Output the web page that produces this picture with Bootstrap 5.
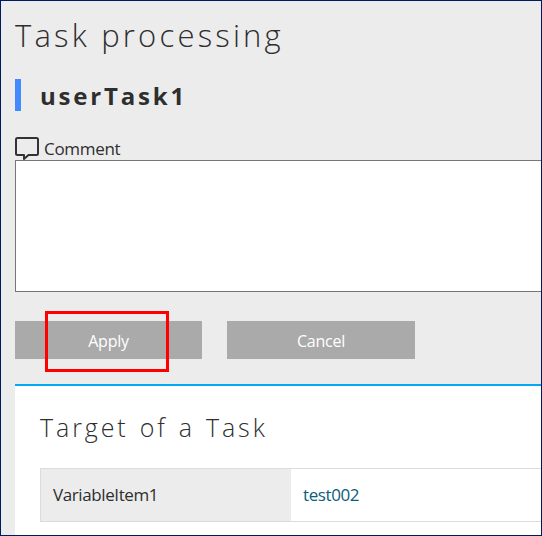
<!DOCTYPE html>
<html lang="en">
<head>
<meta charset="utf-8">
<meta name="viewport" content="width=device-width, initial-scale=1">
<title>Task processing</title>
<link href="https://cdn.jsdelivr.net/npm/bootstrap@5.3.0/dist/css/bootstrap.min.css" rel="stylesheet">
<style>
body{font-family:"Open Sans","Noto Sans",sans-serif;color:#2e2e2e}
.frame{height:536px;border:1px solid #001a5e;background:#ececec;padding-left:14px}
.page-title{font-size:31px;font-weight:300;letter-spacing:3.2px;line-height:42px;padding-top:13px;height:78px}
.task-name{height:32px;border-left:6px solid #448aff;padding-left:19px;font-size:24px;font-weight:700;letter-spacing:2.8px;line-height:34px}
.comment-label{height:49px;padding-top:26px;font-size:17px;line-height:23px;letter-spacing:-.3px}
.comment-label svg{margin-right:5px}
.comment-box{height:132px;border:1px solid #767676;border-right:0;border-radius:0;resize:none}
.actions{margin-top:29px;gap:25px}
.action{width:188px;height:38px;background:#aaa;color:#fff;border:0;border-radius:0;padding:2px 0 0;font-size:16px;letter-spacing:-.25px;--bs-btn-hover-color:#fff}
.action:first-child{width:187px}
.highlight{left:30px;top:-10px;width:124px;height:61px;border:3px solid #f00;pointer-events:none}
.target{margin-top:25px;border-top:2px solid #03a9f4;padding-left:25px}
.target-title{font-size:25px;font-weight:300;letter-spacing:2.9px;word-spacing:1.7px;line-height:34px;height:82px;padding-top:24px}
.item-row{height:54px;border:1px solid #dcdcdc;border-right:0;font-size:17px;letter-spacing:-.4px}
.item-name{width:250px;background:#ececec;padding-left:12px}
.item-value{padding-left:12px;color:#0b5c7d;text-decoration:none}
</style>
</head>
<body>
<main class="frame overflow-hidden d-flex flex-column">
  <h1 class="page-title m-0 flex-shrink-0">Task processing</h1>
  <h2 class="task-name m-0 flex-shrink-0">userTask1</h2>
  <label class="comment-label d-flex align-items-center flex-shrink-0" for="comment">
    <svg width="24" height="24" viewBox="0 0 24 24" fill="none" stroke="#333" stroke-width="2" stroke-linejoin="round"><path d="M2.5 1H21.500Q23 1 23 2.500V16.500Q23 18 21.500 18H13.500L9 22V18H2.500Q1 18 1 16.500V2.500Q1 1 2.500 1Z"/></svg><span>Comment</span>
  </label>
  <textarea id="comment" class="comment-box form-control bg-white flex-shrink-0"></textarea>
  <div class="actions d-flex position-relative">
    <button type="button" class="btn action">Apply</button>
    <button type="button" class="btn action">Cancel</button>
    <div class="highlight position-absolute"></div>
  </div>
  <section class="target bg-white flex-grow-1">
    <h3 class="target-title m-0">Target of a Task</h3>
    <div class="item-row d-flex">
      <div class="item-name d-flex align-items-center">VariableItem1</div>
      <a href="#" class="item-value d-flex align-items-center">test002</a>
    </div>
  </section>
</main>
<script src="https://cdn.jsdelivr.net/npm/bootstrap@5.3.0/dist/js/bootstrap.bundle.min.js"></script>
</body>
</html>
